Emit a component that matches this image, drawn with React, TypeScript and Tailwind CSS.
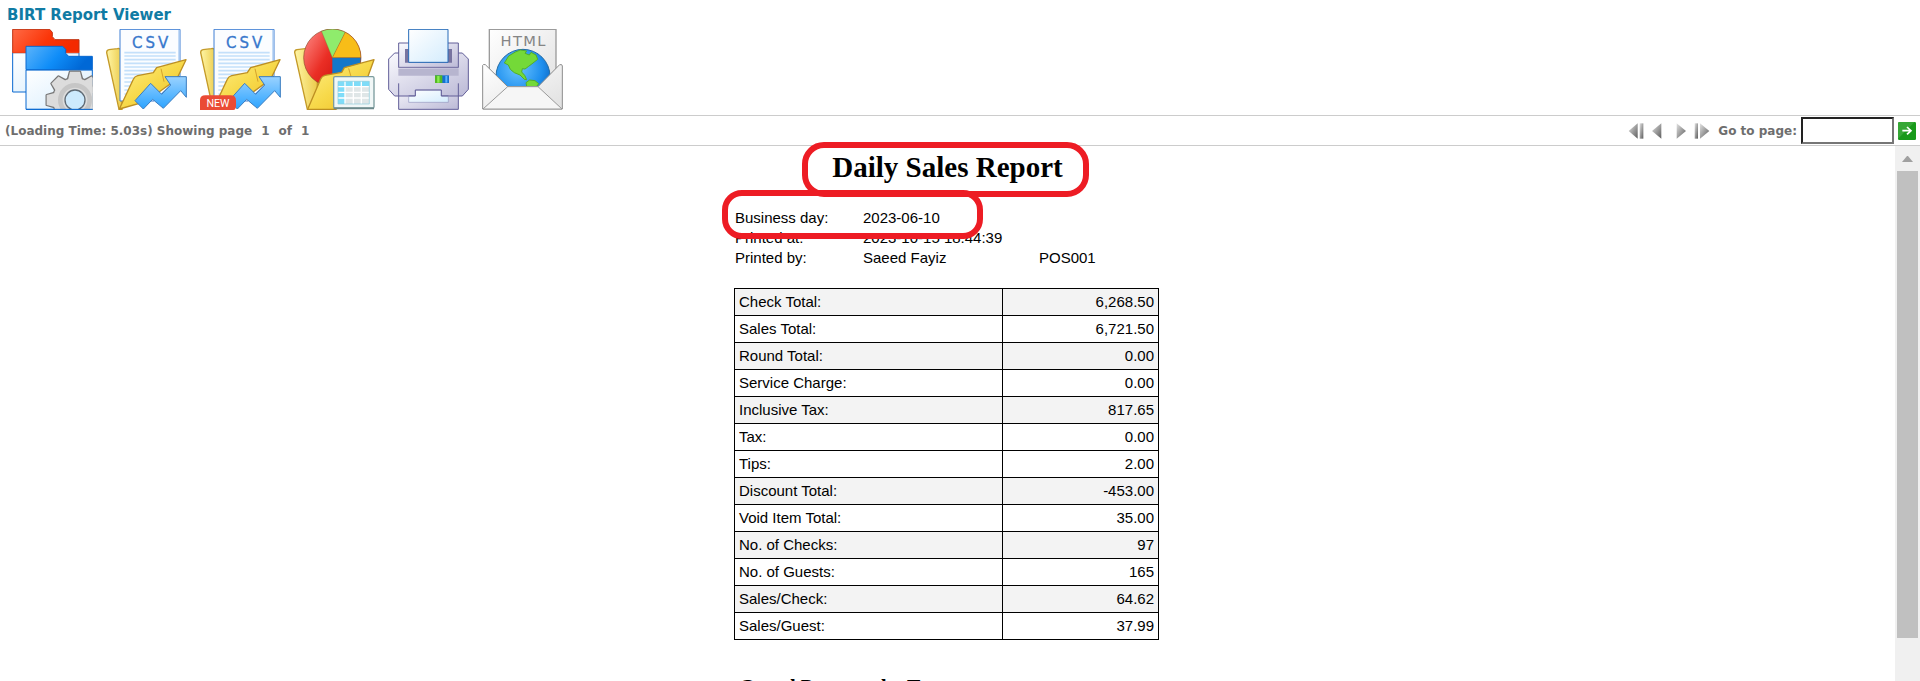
import type { ReactNode } from "react";

const totals = [
  { label: "Check Total:", value: "6,268.50", shaded: true },
  { label: "Sales Total:", value: "6,721.50", shaded: false },
  { label: "Round Total:", value: "0.00", shaded: true },
  { label: "Service Charge:", value: "0.00", shaded: false },
  { label: "Inclusive Tax:", value: "817.65", shaded: true },
  { label: "Tax:", value: "0.00", shaded: false },
  { label: "Tips:", value: "2.00", shaded: false },
  { label: "Discount Total:", value: "-453.00", shaded: true },
  { label: "Void Item Total:", value: "35.00", shaded: false },
  { label: "No. of Checks:", value: "97", shaded: true },
  { label: "No. of Guests:", value: "165", shaded: false },
  { label: "Sales/Check:", value: "64.62", shaded: true },
  { label: "Sales/Guest:", value: "37.99", shaded: false },
];

const gearTeeth = [0, 45, 90, 135, 180, 225, 270, 315];

function Gradients() {
  return (
    <svg className="absolute h-0 w-0" aria-hidden="true">
      <defs>
        <linearGradient id="red" x1="0" y1="0" x2="1" y2="0.3">
          <stop offset="0" stopColor="#ff6a45" />
          <stop offset="0.6" stopColor="#fb3508" />
          <stop offset="1" stopColor="#f42a00" />
        </linearGradient>
        <linearGradient id="blue" x1="0" y1="0" x2="1" y2="0.3">
          <stop offset="0" stopColor="#5cb4fb" />
          <stop offset="0.55" stopColor="#0f8df8" />
          <stop offset="1" stopColor="#0068d6" />
        </linearGradient>
        <linearGradient id="sheet" x1="0" y1="0" x2="1" y2="1">
          <stop offset="0" stopColor="#ffffff" />
          <stop offset="1" stopColor="#d4ecfd" />
        </linearGradient>
        <linearGradient id="folderBack" x1="0" y1="0" x2="1" y2="0">
          <stop offset="0" stopColor="#fff6a6" />
          <stop offset="1" stopColor="#eccb4b" />
        </linearGradient>
        <linearGradient id="folderFront" x1="0" y1="0" x2="1" y2="1">
          <stop offset="0" stopColor="#fff08a" />
          <stop offset="0.5" stopColor="#f7d94a" />
          <stop offset="1" stopColor="#eebb22" />
        </linearGradient>
        <linearGradient id="arrow" x1="0" y1="0" x2="0" y2="1">
          <stop offset="0" stopColor="#9ad2ff" />
          <stop offset="1" stopColor="#2ba3ff" />
        </linearGradient>
        <linearGradient id="plastic" x1="0" y1="0" x2="1" y2="1">
          <stop offset="0" stopColor="#fafafe" />
          <stop offset="1" stopColor="#bbb9d6" />
        </linearGradient>
        <linearGradient id="pieRed" x1="0" y1="0" x2="1" y2="0.6">
          <stop offset="0" stopColor="#ff8f8a" />
          <stop offset="0.5" stopColor="#ea2e25" />
          <stop offset="1" stopColor="#c50c06" />
        </linearGradient>
        <linearGradient id="paper" x1="0" y1="0" x2="1" y2="1">
          <stop offset="0" stopColor="#ffffff" />
          <stop offset="1" stopColor="#e0e0e0" />
        </linearGradient>
        <radialGradient id="ocean" cx="0.4" cy="0.35" r="0.65">
          <stop offset="0" stopColor="#6cc4ff" />
          <stop offset="0.7" stopColor="#1e8fee" />
          <stop offset="1" stopColor="#0f6cc8" />
        </radialGradient>
        <linearGradient id="nav" x1="0" y1="0" x2="1" y2="1">
          <stop offset="0" stopColor="#e2e2e2" />
          <stop offset="1" stopColor="#5c5c5c" />
        </linearGradient>
        <clipPath id="gearClip">
          <path d="M49 100H248V250H49Z" />
        </clipPath>
      </defs>
    </svg>
  );
}

function TocIcon() {
  return (
    <svg viewBox="6 9 243 243" className="size-[81px]">
      <path d="M8 80V198H207V80Z" fill="url(#sheet)" stroke="#0868d0" strokeWidth="3" />
      <path d="M8 80V10H119L127 19V32L135 41H207V80Z" fill="url(#red)" stroke="#c13312" strokeWidth="3" />
      <path d="M9 79H206" stroke="#f8451c" strokeWidth="3" />
      <path d="M48 132V250H247V132Z" fill="url(#sheet)" stroke="#0868d0" strokeWidth="3" />
      <path d="M48 131V61H158L167 70V82L176 91H247V131Z" fill="url(#blue)" stroke="#0868d0" strokeWidth="3" />
      <g clipPath="url(#gearClip)">
        {/* outline first, then the body over it, so the teeth join without seams */}
        <g fill="#777777" stroke="#777777" strokeWidth="7" strokeLinejoin="round">
          {gearTeeth.map((angle) => (
            <path key={angle} d="M172 165L180 137H210L218 165Z" transform={`rotate(${angle} 195 222)`} />
          ))}
          <circle cx="195" cy="222" r="66" />
        </g>
        <g fill="#dcdcdc">
          {gearTeeth.map((angle) => (
            <path key={angle} d="M172 170L180 137H210L218 170Z" transform={`rotate(${angle} 195 222)`} />
          ))}
          <circle cx="195" cy="222" r="66" />
        </g>
        <circle cx="195" cy="222" r="44" fill="none" stroke="#c6c6c6" strokeWidth="14" />
        <circle cx="195" cy="222" r="30" fill="#cdeafd" stroke="#606b75" strokeWidth="4" />
      </g>
      <path d="M48 250H248" stroke="#0868d0" strokeWidth="3" />
    </svg>
  );
}

function CsvIcon({ badge }: { badge?: boolean }) {
  return (
    <svg viewBox="6 9 243 243" className="size-[81px]">
      <path d="M45 250L8 80Q8 72 15 71L40 68Q50 66 54 74V250Z" fill="url(#folderBack)" stroke="#c49a28" strokeWidth="4" />
      <path d="M48 10H228V150L150 225H48Z" fill="#fbfdff" stroke="#3f7fd4" strokeWidth="3" />
      <path d="M225 12V146" stroke="#a9cbf2" strokeWidth="4" />
      <path
        d="M61 80H215M61 90H215M61 101H215M61 112H215M61 123H215M61 134H215M61 145H215M61 156H140M61 168H110M61 180H90M61 192H80M61 204H72"
        stroke="#c4e0fa"
        strokeWidth="5"
      />
      <text
        x="143"
        y="66"
        textAnchor="middle"
        fontFamily="DejaVu Sans, sans-serif"
        fontSize="45"
        fill="#3878cc"
        stroke="#3878cc"
        strokeWidth="1"
        letterSpacing="9"
      >
        CSV
      </text>
      <path
        d="M46 249L88 160Q92 151 101 149L148 140L158 125L246 101L218 160L125 227Z"
        fill="url(#folderFront)"
        stroke="#bd8f22"
        strokeWidth="4"
        strokeLinejoin="round"
      />
      <path d="M171 128L180 167" stroke="#d5a22a" strokeWidth="3" />
      <path
        d="M93 224L140 172L173 205L200 177L183 152H247V214L230 194L178 247L146 220L118 249Z"
        fill="url(#arrow)"
        stroke="#3a7cc0"
        strokeWidth="3"
        strokeLinejoin="round"
      />
      {badge && (
        <>
          <path d="M6 252V223Q6 208 22 208H98Q114 208 114 224V238Q114 252 106 252Z" fill="#ea4b35" />
          <text x="60" y="243" textAnchor="middle" fontFamily="Roboto, sans-serif" fontSize="32" fill="#ffffff">
            NEW
          </text>
        </>
      )}
    </svg>
  );
}

function ExportReportIcon() {
  return (
    <svg viewBox="315 27 243 243" className="size-[81px]">
      <path d="M355 268L317 97Q317 90 324 89L355 85L385 120V268Z" fill="url(#folderBack)" stroke="#c49a28" strokeWidth="4" />
      <circle cx="430" cy="113" r="86" fill="url(#pieRed)" />
      <path d="M430 113L397 33A86 86 0 0 1 469 36Z" fill="#8fec6c" />
      <path d="M430 113L469 36A86 86 0 0 1 516 113Z" fill="#f8bd18" />
      <path d="M430 113H516A86 86 0 0 1 430 199Z" fill="#1477c9" />
      <path d="M430 113L397 33M430 113L469 36M430 113H516" stroke="#8a6a2a" strokeWidth="2" opacity="0.6" />
      <circle cx="430" cy="113" r="86" fill="none" stroke="#8f4a2c" strokeWidth="2" />
      <path
        d="M356 268L395 177Q399 168 408 166L458 157L466 143L555 119L522 210L440 268Z"
        fill="url(#folderFront)"
        stroke="#bd8f22"
        strokeWidth="4"
        strokeLinejoin="round"
      />
      <path d="M479 145L489 180" stroke="#d5a22a" strokeWidth="3" />
      <rect x="434" y="170" width="121" height="94" rx="4" fill="#f1f7f7" stroke="#7c9c9e" strokeWidth="4" />
      <path d="M434 265H555" stroke="#6d898b" strokeWidth="5" />
      <rect x="447" y="184" width="94" height="68" fill="#ffffff" />
      <path d="M447 184H541V199H468V252H447Z" fill="#7edcf8" />
      <path d="M468 199H541V252H468Z" fill="#dfe6e7" />
      <path
        d="M468 184V252M493 184V252M517 184V252M447 200H541M447 217H541M447 234H541"
        fill="none"
        stroke="#ffffff"
        strokeWidth="4"
      />
      <path d="M447 184H541V252H447Z" fill="none" stroke="#8ccbdc" strokeWidth="2" />
    </svg>
  );
}

function PrinterIcon() {
  return (
    <svg viewBox="27 27 243 243" className="size-[81px]">
      <path d="M59 190V268H238V190Z" fill="url(#plastic)" stroke="#625e98" strokeWidth="3" />
      <path
        d="M29 117L47 99H250L268 117V208L250 228H47L29 208Z"
        fill="url(#plastic)"
        stroke="#625e98"
        strokeWidth="3"
      />
      <path d="M59 69H238V146H59Z" fill="url(#plastic)" />
      <path d="M59 142V69H238V142" fill="none" stroke="#625e98" strokeWidth="3" />
      <path d="M78 87H219V128H78Z" fill="#77739f" />
      <path d="M58 146H239V167H58Z" fill="#b7b5cf" />
      <path d="M58 142H239" stroke="#716d9f" strokeWidth="3" />
      <path d="M89 28H207V127H89Z" fill="url(#sheet)" stroke="#266bb8" strokeWidth="3" />
      <path d="M168 166H210V189H168Z" fill="#176fce" />
      <path d="M168 166H190V189H168Z" fill="#55b925" />
      <path d="M178 168V188" stroke="#8aed53" strokeWidth="7" />
      <path d="M202 168V188" stroke="#57b5ff" strokeWidth="6" />
      <path d="M59 190V228M238 190V228" stroke="#625e98" strokeWidth="3" />
      <path d="M89 228V247H208V228H187V210H109V228Z" fill="url(#sheet)" stroke="#9697bf" strokeWidth="2" />
      <path d="M89 228H109V210H187V228H208" fill="none" stroke="#625e98" strokeWidth="3" />
    </svg>
  );
}

function HtmlMailIcon() {
  return (
    <svg viewBox="309 27 243 243" className="size-[81px]">
      <path d="M331 28H531V220H331Z" fill="url(#paper)" stroke="#9b9b9b" strokeWidth="4" />
      <text
        x="434"
        y="77"
        textAnchor="middle"
        fontFamily="DejaVu Sans, sans-serif"
        fontSize="44"
        fill="#858585"
        letterSpacing="4"
      >
        HTML
      </text>
      <circle cx="432" cy="169" r="81" fill="url(#ocean)" stroke="#246ca4" strokeWidth="3" />
      <path
        d="M376 129L389 108L409 96L424 90L443 93L438 100L451 105L456 97L471 105L476 118L462 129L449 139L438 147L430 146L428 156L437 166L443 179L436 178L423 165L406 158L394 148L388 135Z"
        fill="#74d938"
        stroke="#52ad2b"
        strokeWidth="3"
      />
      <path d="M441 188L452 180L468 182L479 191L470 203H444Z" fill="#74d938" stroke="#52ad2b" strokeWidth="3" />
      <path
        d="M311 136Q312 132 319 134L386 200H477L542 134Q550 132 550 138V267H311Z"
        fill="url(#paper)"
        stroke="#8c8c8c"
        strokeWidth="3"
        strokeLinejoin="round"
      />
      <path d="M312 267L386 200H477L549 267Z" fill="#f6f6f6" stroke="#9a9a9a" strokeWidth="3" strokeLinejoin="round" />
    </svg>
  );
}

function ToolButton({ label, children }: { label: string; children: ReactNode }) {
  return (
    <button type="button" aria-label={label} className="block">
      {children}
    </button>
  );
}

function NavButton({ label, children }: { label: string; children: ReactNode }) {
  return (
    <button type="button" aria-label={label} className="block">
      <svg viewBox="0 0 48 48" className="size-4">
        {children}
      </svg>
    </button>
  );
}

function Toolbar() {
  return (
    <div className="flex gap-[13px] px-3 pt-1 pb-[5px]">
      <ToolButton label="Toggle table of contents">
        <TocIcon />
      </ToolButton>
      <ToolButton label="Export data">
        <CsvIcon />
      </ToolButton>
      <ToolButton label="Export data, new version">
        <CsvIcon badge />
      </ToolButton>
      <ToolButton label="Export report">
        <ExportReportIcon />
      </ToolButton>
      <ToolButton label="Print report">
        <PrinterIcon />
      </ToolButton>
      <ToolButton label="Send as HTML">
        <HtmlMailIcon />
      </ToolButton>
    </div>
  );
}

function NavigationBar() {
  return (
    <div className="flex h-[31px] items-center border-y border-[#cccccc] pr-1 pl-[5px] text-xs font-bold text-[#6e6e6e]">
      <p className="flex gap-[9px]">
        <span>(Loading Time: 5.03s) Showing page</span>
        <span>1</span>
        <span>of</span>
        <span>1</span>
      </p>
      <div className="ml-auto flex items-center">
        <div className="mr-2 flex gap-1.5">
          <NavButton label="First page">
            <path d="M2 24L29 1V47Z" fill="url(#nav)" />
            <path d="M35 1H46V47H35Z" fill="url(#nav)" />
          </NavButton>
          <NavButton label="Previous page">
            <path d="M6 24L34 1V47Z" fill="url(#nav)" />
          </NavButton>
          <NavButton label="Next page">
            <path d="M42 24L14 1V47Z" fill="url(#nav)" />
          </NavButton>
          <NavButton label="Last page">
            <path d="M2 1H12V47H2Z" fill="url(#nav)" />
            <path d="M46 24L18 1V47Z" fill="url(#nav)" />
          </NavButton>
        </div>
        <label htmlFor="goto" className="mr-1">
          Go to page:
        </label>
        <input
          id="goto"
          type="text"
          className="mr-1 h-[27px] w-[93px] border-2 border-t-[#222222] border-r-[#767676] border-b-[#767676] border-l-[#222222] bg-white px-1"
        />
        <button type="button" aria-label="Go" className="block">
          <svg viewBox="0 0 54 54" className="size-[18px]">
            <rect width="54" height="54" rx="4" fill="#189a1a" />
            <path d="M4 0H50L0 50V4Z" fill="#43ad43" opacity="0.7" />
            <path d="M13 26H38M27 15L39 26L27 37" fill="none" stroke="#ffffff" strokeWidth="5" />
          </svg>
        </button>
      </div>
    </div>
  );
}

function Report() {
  return (
    <article className="mx-auto w-[427px] font-['Liberation_Sans',Arial,sans-serif] text-[15px] text-black">
      <div className="relative pt-[3px]">
        <h1 className="text-center font-['Liberation_Serif',serif] text-[29px] leading-9 font-bold">
          Daily Sales Report
        </h1>
        <div className="absolute -top-1 left-[68px] z-10 h-[55px] w-[287px] rounded-[22px] border-6 border-[#ed1c24]" />
      </div>

      <div className="relative mt-[23px] grid grid-cols-[128px_176px_1fr] pl-px leading-5">
        <span>Business day:</span>
        <span className="col-span-2">2023-06-10</span>
        <span>Printed at:</span>
        <span className="col-span-2">2023-10-15 18:44:39</span>
        <span>Printed by:</span>
        <span>Saeed Fayiz</span>
        <span>POS001</span>
        <div className="absolute -top-[18px] -left-3 z-10 h-[49px] w-[261px] rounded-[20px] border-6 border-[#ed1c24]" />
      </div>

      <table className="mt-5 w-[425px] border-collapse">
        <tbody>
          {totals.map((row) => (
            <tr key={row.label} className={row.shaded ? "bg-[#f3f3f3]" : "bg-white"}>
              <th scope="row" className="h-[27px] border border-black px-1 text-left leading-5 font-normal">
                {row.label}
              </th>
              <td className="h-[27px] w-[156px] border border-black px-1 text-right leading-5">{row.value}</td>
            </tr>
          ))}
        </tbody>
      </table>

      <h2 className="mt-[35px] pl-[5px] font-['Liberation_Serif',serif] text-xl leading-6 font-bold">
        Grand Payment by Type
      </h2>
    </article>
  );
}

function ScrollTrack() {
  return (
    <div className="flex w-[25px] shrink-0 flex-col items-center bg-[#f0f0f0]" aria-hidden="true">
      <svg viewBox="0 0 11 6" className="mt-[10px] mb-[9px] h-[6px] w-[11px]">
        <path d="M0 6L5 0H6L11 6Z" fill="#a0a0a0" />
      </svg>
      <div className="h-[467px] w-[21px] bg-[#c0c0c0]" />
    </div>
  );
}

export default function App() {
  return (
    <div className="flex h-screen flex-col overflow-hidden bg-white font-['DejaVu_Sans',Verdana,sans-serif]">
      <Gradients />
      <header>
        <div className="px-[7px] pt-[5px] text-[15px] leading-5 font-bold text-[#107ba4]">BIRT Report Viewer</div>
        <Toolbar />
        <NavigationBar />
      </header>
      <main className="flex min-h-0 flex-1">
        <div className="min-w-0 flex-1">
          <Report />
        </div>
        <ScrollTrack />
      </main>
    </div>
  );
}
